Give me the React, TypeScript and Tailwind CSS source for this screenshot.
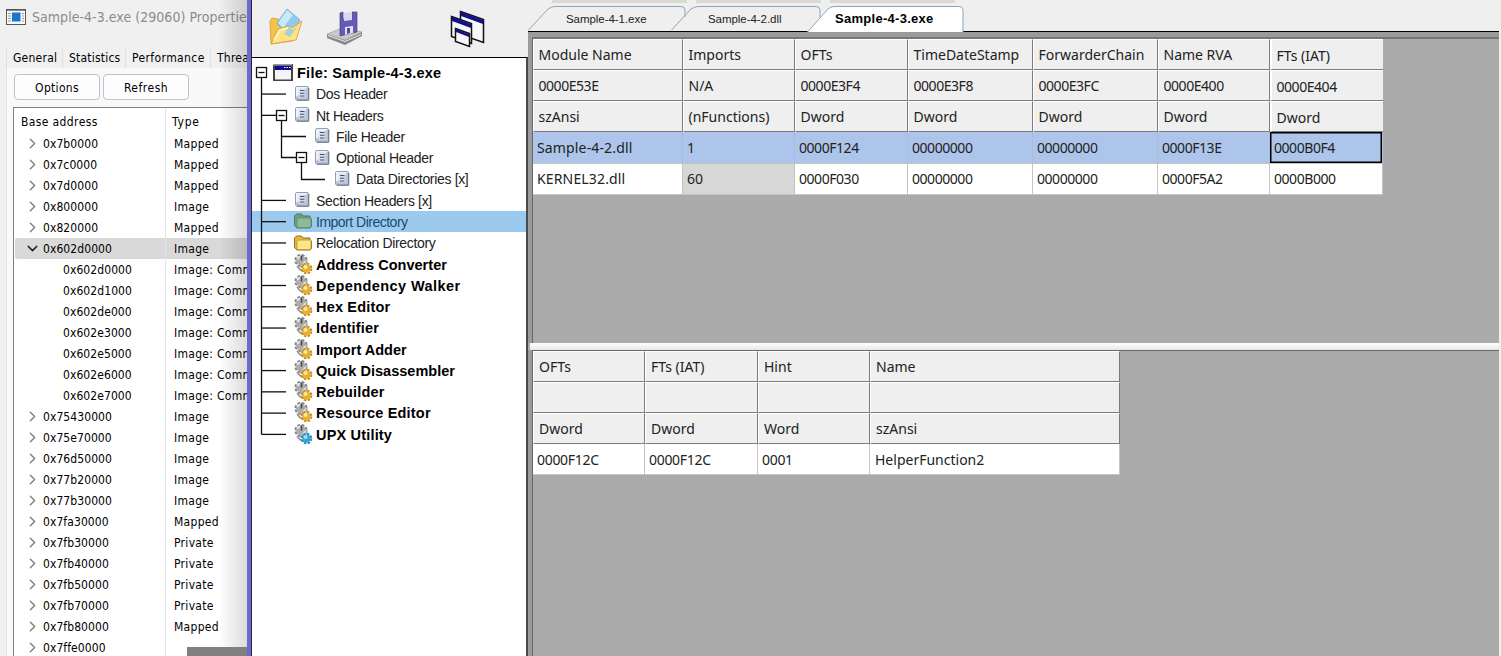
import React from 'react';
import { ChevronDown, ChevronRight } from 'lucide-react';

type MemoryRow = { address: string; type: string; level: number; open?: boolean };

const memory: MemoryRow[] = [
  { address: '0x7b0000', type: 'Mapped', level: 0 },
  { address: '0x7c0000', type: 'Mapped', level: 0 },
  { address: '0x7d0000', type: 'Mapped', level: 0 },
  { address: '0x800000', type: 'Image', level: 0 },
  { address: '0x820000', type: 'Mapped', level: 0 },
  { address: '0x602d0000', type: 'Image', level: 0, open: true },
  { address: '0x602d0000', type: 'Image: Commit', level: 1 },
  { address: '0x602d1000', type: 'Image: Commit', level: 1 },
  { address: '0x602de000', type: 'Image: Commit', level: 1 },
  { address: '0x602e3000', type: 'Image: Commit', level: 1 },
  { address: '0x602e5000', type: 'Image: Commit', level: 1 },
  { address: '0x602e6000', type: 'Image: Commit', level: 1 },
  { address: '0x602e7000', type: 'Image: Commit', level: 1 },
  { address: '0x75430000', type: 'Image', level: 0 },
  { address: '0x75e70000', type: 'Image', level: 0 },
  { address: '0x76d50000', type: 'Image', level: 0 },
  { address: '0x77b20000', type: 'Image', level: 0 },
  { address: '0x77b30000', type: 'Image', level: 0 },
  { address: '0x7fa30000', type: 'Mapped', level: 0 },
  { address: '0x7fb30000', type: 'Private', level: 0 },
  { address: '0x7fb40000', type: 'Private', level: 0 },
  { address: '0x7fb50000', type: 'Private', level: 0 },
  { address: '0x7fb70000', type: 'Private', level: 0 },
  { address: '0x7fb80000', type: 'Mapped', level: 0 },
  { address: '0x7ffe0000', type: '', level: 0 },
];

type IconKind = 'window' | 'page' | 'folder' | 'gears' | 'blueGears';
type TreeItem = { label: string; icon: IconKind; pad: string; text: string; selected?: boolean };

const plain = 'text-[14px] tracking-[-0.33px] text-[#222]';
const bold = 'text-[14.5px] font-bold tracking-[0.02px] text-black';
const boldWide = 'text-[14.5px] font-bold tracking-[0.18px] text-black';

const tree: TreeItem[] = [
  { label: 'File: Sample-4-3.exe', icon: 'window', pad: 'pl-[21px]', text: 'ml-px text-[14.5px] font-bold tracking-[0.25px] text-black' },
  { label: 'Dos Header', icon: 'page', pad: 'pl-[41px]', text: plain },
  { label: 'Nt Headers', icon: 'page', pad: 'pl-[41px]', text: plain },
  { label: 'File Header', icon: 'page', pad: 'pl-[61px]', text: plain },
  { label: 'Optional Header', icon: 'page', pad: 'pl-[61px]', text: plain },
  { label: 'Data Directories [x]', icon: 'page', pad: 'pl-[81px]', text: plain },
  { label: 'Section Headers [x]', icon: 'page', pad: 'pl-[41px]', text: plain },
  { label: 'Import Directory', icon: 'folder', pad: 'pl-[41px]', text: 'text-[14px] tracking-[-0.5px] text-[#174a70]', selected: true },
  { label: 'Relocation Directory', icon: 'folder', pad: 'pl-[41px]', text: plain },
  { label: 'Address Converter', icon: 'gears', pad: 'pl-[41px]', text: bold },
  { label: 'Dependency Walker', icon: 'gears', pad: 'pl-[41px]', text: 'text-[14.5px] font-bold tracking-[0.43px] text-black' },
  { label: 'Hex Editor', icon: 'gears', pad: 'pl-[41px]', text: boldWide },
  { label: 'Identifier', icon: 'gears', pad: 'pl-[41px]', text: boldWide },
  { label: 'Import Adder', icon: 'gears', pad: 'pl-[41px]', text: bold },
  { label: 'Quick Disassembler', icon: 'gears', pad: 'pl-[41px]', text: bold },
  { label: 'Rebuilder', icon: 'gears', pad: 'pl-[41px]', text: boldWide },
  { label: 'Resource Editor', icon: 'gears', pad: 'pl-[41px]', text: boldWide },
  { label: 'UPX Utility', icon: 'blueGears', pad: 'pl-[41px]', text: boldWide },
];

function TreeIcon({ kind, selected }: { kind: IconKind; selected?: boolean }) {
  if (kind === 'window') {
    return (
      <svg className="h-5 w-5 shrink-0" viewBox="0 0 20 20">
        <rect x="0" y="1" width="20" height="17" fill="#444" />
        <rect x="0" y="1" width="19" height="1.5" fill="#999" />
        <rect x="2" y="3" width="16" height="4" fill="#0b0b9a" />
        <path d="M11 4.5h1.5M13.5 4.5H15M16 4.5h1.500" stroke="#fff" strokeWidth="1.2" />
        <rect x="2" y="7" width="16" height="9.500" fill="#f4f4f6" />
      </svg>
    );
  }
  if (kind === 'page') {
    return (
      <svg className="h-5 w-5 shrink-0" viewBox="0 0 20 20">
        <rect x="2.500" y="2.500" width="13" height="13.500" rx="1.500" fill="#b9c2d5" stroke="#929bb0" />
        <path d="M3 3h12l-12 10z" fill="#eef2f9" />
        <rect x="5.500" y="4.500" width="7" height="9" fill="#d9e0ed" />
        <path d="M7 6.500h4.500M7 9.200h4.500M7 12h4.500" stroke="#46516b" strokeWidth="1.100" />
        <path d="M15.800 4v12.300H4" fill="none" stroke="#6d768a" strokeWidth="1" />
      </svg>
    );
  }
  if (kind === 'folder') {
    return (
      <svg className="h-5 w-5 shrink-0" viewBox="0 0 20 20">
        <path
          d="M1.500 14.500V5l2-2h5l1.500 2h7v3h1.500v7.500l-1.500 1.500H4z"
          fill={selected ? '#6e9f7d' : '#e6b53c'}
          stroke={selected ? '#4c7a66' : '#8f711f'}
        />
        <path
          d="M4 15.500V8.500l1.500-1.500h12.500v8l-1 1.500H5z"
          fill={selected ? '#8dbb96' : '#ffe58a'}
          stroke={selected ? '#5d8f78' : '#bd942f'}
          strokeWidth="0.800"
        />
      </svg>
    );
  }
  const front = kind === 'gears' ? '#e8b02c' : '#35a5d8';
  const edge = kind === 'gears' ? '#c48a20' : '#2a86b8';
  return (
    <svg className="h-[21px] w-5 shrink-0" viewBox="0 0 20 21">
      <circle cx="8" cy="6.500" r="5.500" fill="none" stroke="#858585" strokeWidth="2.200" strokeDasharray="2.800 1.520" />
      <circle cx="8" cy="6.500" r="4.900" fill="#adadad" />
      <path d="M4.500 5A4.500 4.500 0 0 1 7 2.500" stroke="#ececec" strokeWidth="1.800" fill="none" />
      <path d="M8.500 1.500v5" stroke="#444" strokeWidth="1.500" fill="none" />
      <path d="M10 10l3-3" stroke="#dedede" strokeWidth="2" fill="none" />
      <path d="M4 12l3 3.500 4 2" stroke="#909090" strokeWidth="1.600" fill="none" />
      <circle cx="13.500" cy="14.500" r="4.700" fill="none" stroke={edge} strokeWidth="2.200" strokeDasharray="2.300 1.390" />
      <circle cx="13.500" cy="14.500" r="4.200" fill={front} />
      <circle cx="12.500" cy="13" r="2" fill={kind === 'gears' ? '#ffe9a0' : '#a5def4'} />
    </svg>
  );
}

function TreeLines() {
  const stubs = [1, 2, 6, 7, 8, 9, 10, 11, 12, 13, 14, 15, 16, 17];
  return (
    <svg className="pointer-events-none absolute top-0 left-0" width="80" height="392" fill="none" stroke="#111" strokeWidth="1.300">
      <path d="M9.500 20V376.500" />
      {stubs.map((n) => (
        <path key={n} d={`M9.500 ${14.800 + n * 21.270}H${n === 2 ? 24 : 34}`} />
      ))}
      <path d="M29.500 62V99.500H44M29.500 78.500H54M49.500 104V121.500H73" />
      {[
        [4.500, 9.500],
        [24.500, 52.500],
        [44.500, 94.500],
      ].map(([x, y]) => (
        <g key={x}>
          <rect x={x} y={y} width="10" height="10" fill="#fff" />
          <path d={`M${x + 2} ${y + 5}h6`} />
        </g>
      ))}
    </svg>
  );
}

function AppGlyph() {
  return (
    <svg className="ml-[6px] h-4 w-5 shrink-0" viewBox="0 0 20 16">
      <rect x="0.500" y="0.500" width="19" height="15" fill="#f8f8f8" stroke="#555" />
      <path d="M1 1.500h18" stroke="#8a8a8a" />
      <path d="M2 4.500h3M2 7h3M2 9.500h3M2 12h3M16 4.500h2M16 7h2M16 9.500h2M16 12h2" stroke="#999" />
      <rect x="6" y="3.500" width="8.500" height="9" fill="#1478d0" />
    </svg>
  );
}

function OpenGlyph() {
  return (
    <svg className="h-[38px] w-9" viewBox="0 0 36 38">
      <path d="M2 13l2-3 6 1 2 3 13-1 5 3-6 17-21 3z" fill="#f2c54a" stroke="#d39b34" strokeWidth="0.800" />
      <path d="M9 15L19 1l13 11-11 17z" fill="#92c9ee" stroke="#6aa5d2" strokeWidth="0.800" />
      <path d="M10 15L19 2l6 5-10 13z" fill="#c8e8fb" />
      <path d="M3 36l7-15 11-3 3 2 10-7-6 19z" fill="#ffe382" stroke="#d9a437" strokeWidth="0.900" />
      <path d="M20 19l5 3 6-6-9 13-6-3z" fill="#8fcbe9" opacity="0.800" />
      <path d="M6 32l6-10 8-2" stroke="#fff5bd" strokeWidth="2" fill="none" />
    </svg>
  );
}

function SaveGlyph() {
  return (
    <svg className="h-[38px] w-[38px]" viewBox="0 0 38 38">
      <path d="M1 24l15-6 20 4v4L19 35 1 28z" fill="#888" />
      <path d="M1 24l15-6 20 4-17 8z" fill="#c9c9c9" stroke="#aaa" strokeWidth="0.600" />
      <path d="M2 25.500l17 6 16-7" stroke="#efefef" fill="none" />
      <path d="M14 3l3-1v7h9V2h5v20l-17 4z" fill="#655bb5" stroke="#4c4491" strokeWidth="0.700" />
      <path d="M18 3l8-1v8l-8 1z" fill="#d9d7ec" />
      <path d="M19 17l8-1v7l-8 2z" fill="#e3e3ef" />
      <path d="M21 18h3v5l-3 1z" fill="#534a9c" />
    </svg>
  );
}

function CascadeGlyph() {
  const panes = ['M10.500 2.500l23 8v23l-23-8z', 'M1.500 7.500l20 7v20l-20-7z', 'M5.500 19.500l14 5v13l-14-5z'];
  const bars = ['M11 3l22 8v4l-22-8z', 'M2 8l19 7v4l-19-7z', 'M6 20l13 5v3l-13-5z'];
  return (
    <svg className="h-10 w-9" viewBox="0 0 36 40">
      {panes.map((d, i) => (
        <g key={d}>
          <path d={d} fill="#f7f7f7" stroke="#111" strokeWidth="1.500" />
          <path d={bars[i]} fill="#11128e" />
        </g>
      ))}
    </svg>
  );
}

function ProcessWindow() {
  return (
    <section className="relative flex h-full w-[247px] shrink-0 flex-col overflow-hidden bg-[#f0f0f0] font-['DejaVu_Sans_Condensed','DejaVu_Sans',sans-serif] text-[12px] whitespace-nowrap text-black">
      <div className="flex h-[47px] items-start pt-[9px]">
        <AppGlyph />
        <span className="ml-[6px] text-[14px] leading-[17px] tracking-[0.04px] text-[#8c8c8c]">Sample-4-3.exe (29060) Properties</span>
      </div>
      <div className="ml-[6px] flex h-[21px] text-[12px] leading-[22px]">
        <span className="w-[57px] shrink-0 border-x border-[#e0e0e0] pl-[6px] tracking-[0.25px]">General</span>
        <span className="w-[63px] shrink-0 border-r border-[#e0e0e0] pl-[6px] tracking-[0.2px]">Statistics</span>
        <span className="w-[85px] shrink-0 border-r border-[#e0e0e0] pl-[6px] tracking-[0.4px]">Performance</span>
        <span className="pl-[6px] tracking-[0.25px]">Threads</span>
      </div>
      <div className="ml-[6px] flex min-h-0 flex-1 flex-col border-l border-[#e2e2e2] bg-[#f9f9f9]">
        <div className="flex h-[39px] gap-[3px] pt-[6px] pl-[7px]">
          <button className="h-[26px] w-[86px] rounded-[4px] border border-[#b9c4cf] bg-[#fdfdfd] pt-px tracking-[0.3px]">Options</button>
          <button className="h-[26px] w-[86px] rounded-[4px] border border-[#b9c4cf] bg-[#fdfdfd] pt-px tracking-[0.5px]">Refresh</button>
        </div>
        <div className="relative ml-[6px] flex min-h-0 flex-1 flex-col overflow-hidden border-t border-l border-[#7f7f7f] bg-white">
          <div className="absolute top-0 left-[151px] h-full w-px bg-[#e3e3e3]" />
          <div className="flex h-[25px] shrink-0 items-center pt-[3px] leading-[22px]">
            <span className="w-[158px] shrink-0 pl-[7px] tracking-[0.38px]">Base address</span>
            <span className="tracking-[0.8px]">Type</span>
          </div>
          {memory.map((row, i) => (
            <div key={i} className={row.open ? 'ml-px flex h-[21px] shrink-0 items-center rounded-l-[2px] bg-black/15' : 'ml-px flex h-[21px] shrink-0 items-center'}>
              <span className="flex w-[28px] shrink-0 justify-center pl-[7px]">
                {row.level === 0 && (row.open ? <ChevronDown className="shrink-0" size={17} color="#222" strokeWidth={2} /> : <ChevronRight className="shrink-0" size={17} color="#808080" strokeWidth={2} />)}
              </span>
              <span className={row.level === 1 ? 'w-[131px] shrink-0 pl-5 tracking-[0.08px]' : 'w-[131px] shrink-0 tracking-[0.08px]'}>{row.address}</span>
              <span className="tracking-[0.3px]">{row.type}</span>
            </div>
          ))}
        </div>
      </div>
      <div className="pointer-events-none absolute top-0 right-0 h-full w-7 bg-linear-to-r from-transparent to-black/14" />
      <div className="absolute right-0 bottom-0 h-[9px] w-[60px] bg-[#808080]" />
    </section>
  );
}

function Sidebar() {
  return (
    <aside className="flex h-full w-[276px] shrink-0 flex-col bg-[#efefef]">
      <div className="flex h-[57px] shrink-0 items-start pt-[8px] pl-[16px]">
        <OpenGlyph />
        <div className="ml-[22px] pt-[2px]"><SaveGlyph /></div>
        <div className="ml-[86px] pt-px"><CascadeGlyph /></div>
      </div>
      <div className="relative flex min-h-0 flex-1 flex-col border-t border-r-2 border-t-black border-r-[#4a4a4a] bg-white pt-[4px] font-['Liberation_Sans',sans-serif]">
        {tree.map((item) => (
          <div key={item.label} className={`flex h-[21.27px] shrink-0 items-center gap-[3px] whitespace-nowrap ${item.pad} ${item.selected ? 'bg-[#9ccaee]' : ''}`}>
            <TreeIcon kind={item.icon} selected={item.selected} />
            <span className={`relative top-px leading-[21px] ${item.text}`}>{item.label}</span>
          </div>
        ))}
        <TreeLines />
      </div>
    </aside>
  );
}

const tabs = [
  { label: 'Sample-4-1.exe', width: 'w-[143px]', text: 'pl-[38px] text-[11.5px] tracking-[-0.05px] text-[#222]', path: 'M0.500 25L20 4Q24 1.500 27 1.500H153Q157 1.500 157 5V12', size: 158 },
  { label: 'Sample-4-2.dll', width: 'w-[136px]', text: 'pl-[37px] text-[11.5px] tracking-[-0.05px] text-[#222]', path: 'M0.500 25L20 4Q24 1.500 27 1.500H145Q149 1.500 149 5V12', size: 150 },
  { label: 'Sample-4-3.exe', width: 'w-[157px]', text: 'pl-[28px] text-[13px] font-bold tracking-[0.28px] text-black', path: 'M0.500 27L21 4Q24 1.500 27 1.500H152Q156 1.500 156 5V27', size: 157 },
];

function Tabs() {
  return (
    <div className="relative flex h-[31px] shrink-0 bg-[#efefef] pt-[5px] font-['Liberation_Sans',sans-serif]">
      <div className="absolute top-0 left-6 flex gap-[9px]">
        <div className="h-[3px] w-[135px] bg-[#dcd8d4]" />
        <div className="h-[3px] w-[125px] bg-[#dcd8d4]" />
        <div className="h-[3px] w-[125px] bg-[#dcd8d4]" />
      </div>
      {tabs.map((tab, i) => (
        <div key={tab.label} className={`relative h-[27px] shrink-0 ${tab.width}`}>
          <svg className="absolute top-0 left-0" width={tab.size} height="27" viewBox={`0 0 ${tab.size} 27`}>
            <path d={tab.path} fill={i === 2 ? '#fff' : 'none'} stroke="#8ea6ba" />
          </svg>
          <span className={`relative block leading-[28px] whitespace-nowrap ${tab.text}`}>{tab.label}</span>
        </div>
      ))}
    </div>
  );
}

const headCell = 'border-t border-l border-t-white border-l-white border-r border-b border-r-[#7c7c7c] border-b-[#7c7c7c] bg-[#efefef]';

const importHead = [
  ['Module Name', 'Imports', 'OFTs', 'TimeDateStamp', 'ForwarderChain', 'Name RVA', 'FTs (IAT)'],
  ['0000E53E', 'N/A', '0000E3F4', '0000E3F8', '0000E3FC', '0000E400', '0000E404'],
  ['szAnsi', '(nFunctions)', 'Dword', 'Dword', 'Dword', 'Dword', 'Dword'],
];
const importRows = [
  ['Sample-4-2.dll', '1', '0000F124', '00000000', '00000000', '0000F13E', '0000B0F4'],
  ['KERNEL32.dll', '60', '0000F030', '00000000', '00000000', '0000F5A2', '0000B000'],
];

const isHex = (text: string) => /^[0-9A-F]{8}$/.test(text);

function ImportTable() {
  return (
    <div className="grid w-[850px] grid-cols-[150px_112px_113px_125px_125px_112px_113px] grid-rows-[31px_31px_31px_32px_31px]">
      {importHead.flatMap((row, r) =>
        row.map((cell, c) => (
          <div
            key={`h${r}-${c}`}
            className={`${headCell} pl-[4.5px] ${c === 6 ? 'border-r-0 border-l-2 border-l-[#7c7c7c] pt-px leading-[30px]' : 'leading-[29px]'} ${isHex(cell) ? 'tracking-[-0.45px]' : ''}`}
          >
            {cell}
          </div>
        )),
      )}
      {importRows.flatMap((row, r) =>
        row.map((cell, c) => (
          <div
            key={`b${r}-${c}`}
            className={`border-r border-b border-[#c4c4c4] pl-1 ${r === 0 ? 'bg-[#aec5eb] leading-[31px] border-r-[#a9bddf]' : c === 1 ? 'bg-[#d7d7d7] leading-[30px]' : 'bg-white leading-[30px]'} ${r === 0 && c === 6 ? 'shadow-[inset_0_0_0_1.5px_#000]' : ''} ${isHex(cell) ? 'tracking-[-0.45px]' : c === 0 ? 'tracking-[0.15px]' : ''}`}
          >
            {cell}
          </div>
        )),
      )}
    </div>
  );
}

const functionHead = [
  ['OFTs', 'FTs (IAT)', 'Hint', 'Name'],
  ['', '', '', ''],
  ['Dword', 'Dword', 'Word', 'szAnsi'],
];
const functionRow = ['0000F12C', '0000F12C', '0001', 'HelperFunction2'];

function FunctionTable() {
  return (
    <div className="grid w-[587px] grid-cols-[112px_113px_112px_250px] grid-rows-[31px_31px_31px_31px]">
      {functionHead.flatMap((row, r) =>
        row.map((cell, c) => (
          <div key={`h${r}-${c}`} className={`${headCell} pl-[5px] leading-[30px]`}>
            {cell}
          </div>
        )),
      )}
      {functionRow.map((cell, c) => (
        <div key={c} className={`border-r border-b border-[#c4c4c4] bg-white leading-[32px] ${c < 3 ? 'pl-1 tracking-[-0.3px]' : 'pl-[5px]'}`}>
          {cell}
        </div>
      ))}
    </div>
  );
}

export default function App() {
  return (
    <div className="relative flex h-[656px] w-[1501px] overflow-hidden bg-[#efefef]">
      <ProcessWindow />
      <div className="h-full w-[5px] shrink-0 border-r border-[#25253c] bg-[#6b6bcb]" />
      <Sidebar />
      <main className="flex min-w-0 flex-1 flex-col">
        <Tabs />
        <div className="mr-[2px] flex min-h-0 flex-1 flex-col border-t border-black bg-[#ababab] font-['Noto_Sans',sans-serif] text-[14px] whitespace-nowrap text-[#222]">
          <div className="h-[311px] shrink-0 border-t-[5px] border-l-[4px] border-[#9b9b9b]">
            <div className="h-full border-t-2 border-l border-[#686868] border-t-[#777]">
              <ImportTable />
            </div>
          </div>
          <div className="ml-[2px] h-[7px] shrink-0 bg-linear-to-b from-white to-[#e7e7e7]" />
          <div className="min-h-0 flex-1 border-l-[4px] border-[#9b9b9b]">
            <div className="h-full border-t border-l border-[#686868]">
              <FunctionTable />
            </div>
          </div>
        </div>
      </main>
    </div>
  );
}
